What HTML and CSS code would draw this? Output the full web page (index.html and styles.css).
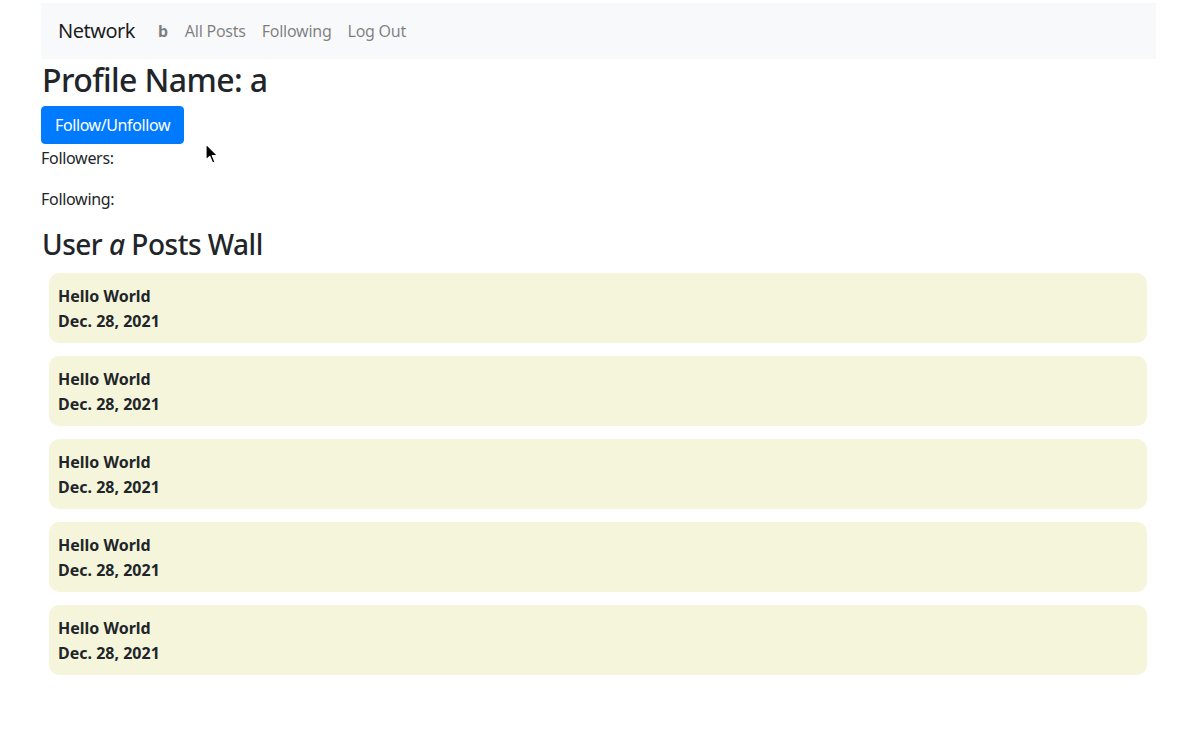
FILE: index.html
```html
<!DOCTYPE html>
<html>
<head>
<meta charset="utf-8">
<link rel="stylesheet" href="styles.css">
</head>
<body>
<div class="page">
  <nav class="navbar">
    <a class="brand" href="#">Network</a>
    <ul class="nav">
      <li><a class="nav-link user" href="#"><strong>b</strong></a></li>
      <li><a class="nav-link" href="#">All Posts</a></li>
      <li><a class="nav-link" href="#">Following</a></li>
      <li><a class="nav-link" href="#">Log Out</a></li>
    </ul>
  </nav>
  <main class="body">
    <h2 class="title">Profile Name: a</h2>
    <button class="btn">Follow/Unfollow</button>
    <p class="stat">Followers: </p>
    <p class="stat">Following: </p>
    <h3 class="wall">User <i>a</i> Posts Wall</h3>
    <div class="posts">
      <div class="post"><div>Hello World</div><div>Dec. 28, 2021</div></div>
      <div class="post"><div>Hello World</div><div>Dec. 28, 2021</div></div>
      <div class="post"><div>Hello World</div><div>Dec. 28, 2021</div></div>
      <div class="post"><div>Hello World</div><div>Dec. 28, 2021</div></div>
      <div class="post"><div>Hello World</div><div>Dec. 28, 2021</div></div>
    </div>
  </main>
</div>
<svg class="cursor" width="14" height="22" viewBox="0 0 14 22">
  <path d="M1 1 L1 17 L4.8 13.4 L7.6 20 L10 19 L7.3 12.6 L12.5 12.6 Z" fill="#000" stroke="#fff" stroke-width="1.2" stroke-linejoin="round"/>
</svg>
</body>
</html>
```
FILE: styles.css
```css
html, body {
  margin: 0;
  padding: 0;
  background: #fff;
}
body {
  font-family: "Noto Sans", "Open Sans", sans-serif;
  font-size: 16px;
  line-height: 1.5;
  color: #212529;
}
.page {
  width: 1115px;
  margin: 3px 0 0 41px;
}
.navbar {
  display: flex;
  align-items: center;
  height: 56px;
  padding: 0 17px;
  background: #f8f9fa;
  box-sizing: border-box;
}
.brand {
  font-size: 20px;
  color: rgba(0,0,0,.9);
  text-decoration: none;
  margin-right: 15px;
  letter-spacing: -0.5px;
}
.nav {
  display: flex;
  list-style: none;
  margin: 0;
  padding: 0;
}
.nav-link {
  display: block;
  padding: 8px 8px;
  color: rgba(0,0,0,.5);
  text-decoration: none;
  letter-spacing: -0.25px;
}
.nav li:nth-child(2) .nav-link {
  padding-left: 9px;
}
.title {
  font-size: 32px;
  font-weight: 500;
  line-height: 1.2;
  margin: 0 0 7px 1px;
  padding-top: 2px;
  letter-spacing: -0.6px;
}
.btn {
  font-family: inherit;
  font-size: 16px;
  line-height: 24px;
  color: #fff;
  background: #007bff;
  border: 1px solid #007bff;
  border-radius: 4px;
  padding: 6px 13px;
  margin-bottom: 2px;
  display: block;
  letter-spacing: -0.4px;
}
.stat {
  margin: 0 0 17px 0;
  letter-spacing: -0.3px;
}
.wall {
  font-size: 28px;
  font-weight: 500;
  line-height: 1.2;
  margin: 0 0 11px 1px;
  letter-spacing: -0.5px;
}
.posts {
  display: flex;
  flex-direction: column;
  gap: 13px;
  padding: 0 9px 0 8px;
}
.post {
  background: #f5f5dc;
  border-radius: 10px;
  padding: 11px 9px 9px;
  font-weight: 700;
  line-height: 25px;
  letter-spacing: 0;
}
.cursor {
  position: absolute;
  left: 205px;
  top: 143px;
}
```
